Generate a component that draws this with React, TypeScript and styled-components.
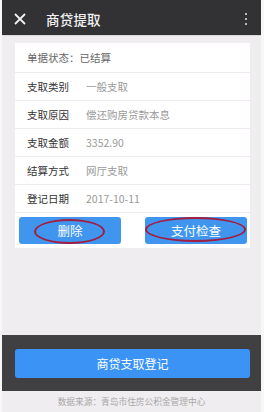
import * as React from 'react';
import styled, { createGlobalStyle } from 'styled-components';

const GlobalStyle = createGlobalStyle`
  body {
    margin: 0;
    background: #f7f7f7;
    font-family: "Noto Sans CJK SC", "Noto Sans", sans-serif;
  }
`;

const Frame = styled.div`
  margin: 0 3px 0 2px;
  height: 412px;
  display: flex;
  flex-direction: column;
`;

const Header = styled.header`
  height: 36px;
  flex: none;
  background: #323235;
  display: flex;
  align-items: center;
  padding: 2px 10px 0 12px;
  box-sizing: border-box;
  border-bottom: 1px solid #d8d8d8;
`;

const Title = styled.h1`
  margin: 0 0 0 20px;
  flex: 1;
  font-size: 13.5px;
  font-weight: 500;
  color: #f2f2f2;
  letter-spacing: 0.2px;
`;

const Kebab = styled.span`
  display: flex;
  flex-direction: column;
  gap: 3px;
  padding-right: 4px;

  i {
    width: 2px;
    height: 2px;
    border-radius: 50%;
    background: #e8e8e8;
  }
`;

const Main = styled.main`
  flex: 1;
  background: #efedef;
  padding: 7px 11px 0 13px;
`;

const Card = styled.section`
  background: #fff;
`;

const Row = styled.div<{ $first?: boolean }>`
  display: grid;
  grid-template-columns: 59px 1fr;
  align-items: center;
  height: ${(p) => (p.$first ? 29 : 27)}px;
  padding-left: 12px;
  border-bottom: 1px solid #ececec;
  font-size: 10.5px;
`;

const Status = styled.span`
  grid-column: 1 / 3;
  color: #666;
`;

const Label = styled.span`
  color: #333;
`;

const Value = styled.span`
  color: #9a9a9a;
`;

const Actions = styled.div`
  display: flex;
  justify-content: space-between;
  padding: 4px 3px 4px 4px;
`;

const ActionButton = styled.button`
  position: relative;
  width: 102px;
  height: 27px;
  border: none;
  border-radius: 3px;
  background: #4096ef;
  color: #fff;
  font-family: inherit;
  font-size: 12.5px;
  padding: 0;
`;

const Mark = styled.span<{ $left: number; $top: number; $w: number }>`
  position: absolute;
  left: ${(p) => p.$left}px;
  top: ${(p) => p.$top}px;
  width: ${(p) => p.$w}px;
  height: 25px;
  box-sizing: border-box;
  border: 2px solid #a21d3f;
  border-radius: 50%;
`;

const BottomBar = styled.div`
  height: 56px;
  flex: none;
  background: #403f41;
  padding: 14px 11px 0 13px;
  box-sizing: border-box;
`;

const SubmitButton = styled.button`
  width: 100%;
  height: 29px;
  border: none;
  border-radius: 3px;
  background: #3b94f5;
  color: #fff;
  font-family: inherit;
  font-size: 12px;
`;

const Footer = styled.footer`
  height: 21px;
  flex: none;
  background: #efedef;
  display: flex;
  justify-content: center;
  align-items: center;
  font-size: 8.7px;
  color: #a8a8a8;
`;

const CloseIcon = () => (
  <svg width="12" height="12" viewBox="0 0 12 12">
    <path d="M1 1L11 11M11 1L1 11" stroke="#f0f0f0" strokeWidth="1.8" />
  </svg>
);

const rows = [
  ['支取类别', '一般支取'],
  ['支取原因', '偿还购房贷款本息'],
  ['支取金额', '3352.90'],
  ['结算方式', '网厅支取'],
  ['登记日期', '2017-10-11'],
];

export default function App() {
  return (
    <>
      <GlobalStyle />
      <Frame>
        <Header>
          <CloseIcon />
          <Title>商贷提取</Title>
          <Kebab>
            <i />
            <i />
            <i />
          </Kebab>
        </Header>
        <Main>
          <Card>
            <Row $first>
              <Status>单据状态：已结算</Status>
            </Row>
            {rows.map(([label, value]) => (
              <Row key={label}>
                <Label>{label}</Label>
                <Value>{value}</Value>
              </Row>
            ))}
            <Actions>
              <ActionButton>
                删除
                <Mark $left={15} $top={2} $w={71} />
              </ActionButton>
              <ActionButton>
                支付检查
                <Mark $left={0} $top={0} $w={101} />
              </ActionButton>
            </Actions>
          </Card>
        </Main>
        <BottomBar>
          <SubmitButton>商贷支取登记</SubmitButton>
        </BottomBar>
        <Footer>数据来源：青岛市住房公积金管理中心</Footer>
      </Frame>
    </>
  );
}
